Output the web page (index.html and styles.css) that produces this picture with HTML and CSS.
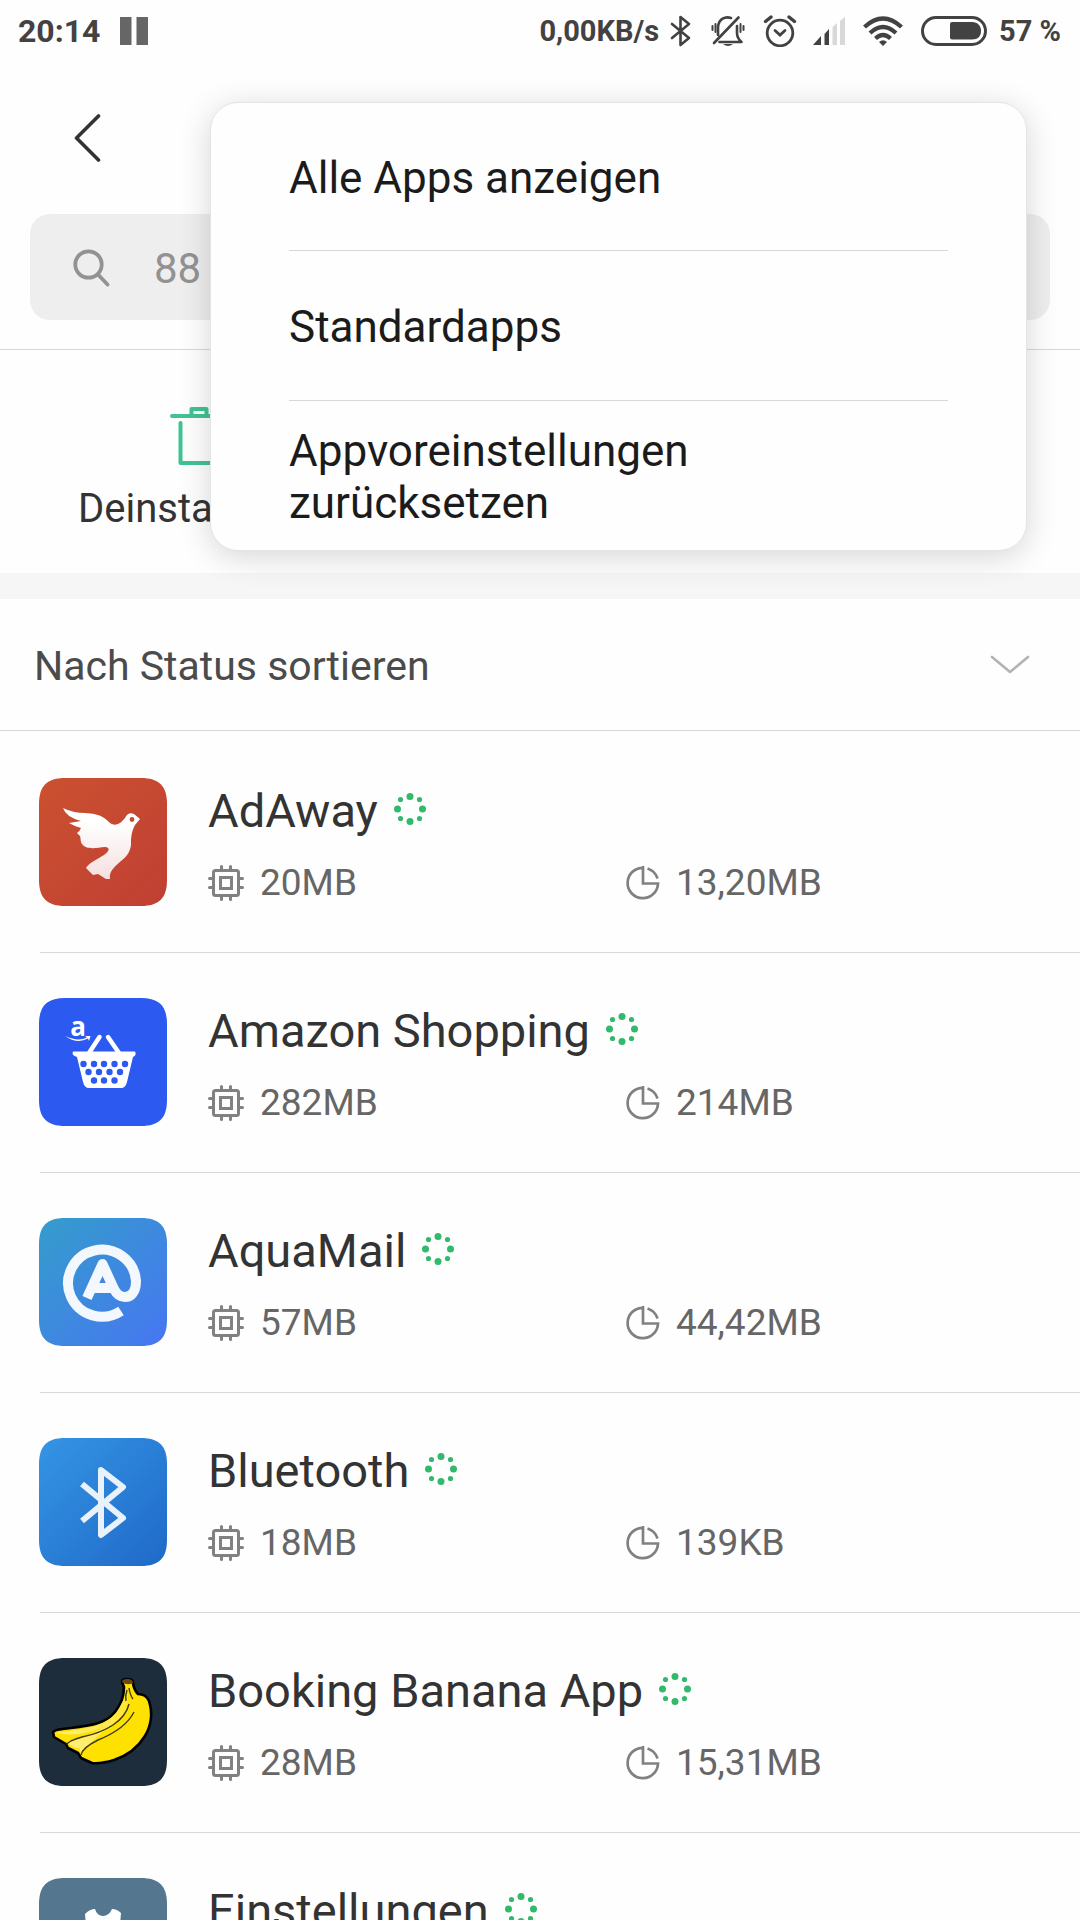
FILE: index.html
```
<!DOCTYPE html>
<html lang="de">
<head>
<meta charset="utf-8">
<meta name="viewport" content="width=device-width, initial-scale=1">
<title>Apps</title>
<link rel="stylesheet" href="styles.css">
</head>
<body>
<svg class="defs" aria-hidden="true">
  <defs>
    <linearGradient id="g-red" x1="0" y1="0" x2="1" y2="1"><stop offset="0" stop-color="#cb5130"/><stop offset="1" stop-color="#c03f33"/></linearGradient>
    <linearGradient id="g-aqua" x1="0" y1="0" x2="1" y2="1"><stop offset="0" stop-color="#349dcb"/><stop offset="1" stop-color="#4776f2"/></linearGradient>
    <linearGradient id="g-blue" x1="0" y1="0" x2="1" y2="1"><stop offset="0" stop-color="#3595e4"/><stop offset="1" stop-color="#1f69c8"/></linearGradient>
    <linearGradient id="g-white" x1="0" y1="0" x2="0" y2="1"><stop offset="0.2" stop-color="#ffffff"/><stop offset="1" stop-color="#f5dfdf"/></linearGradient>
    <linearGradient id="g-peel" x1="0" y1="1" x2="1" y2="0"><stop offset="0" stop-color="#fff08a"/><stop offset="1" stop-color="#ffe526"/></linearGradient>
    <symbol id="squircle" viewBox="0 0 128 128"><path d="M0 64V26C0 8 8 0 26 0H102C120 0 128 8 128 26V102C128 120 120 128 102 128H26C8 128 0 120 0 102Z"/></symbol>
    <symbol id="chip" viewBox="0 0 36 36"><g fill="none" stroke="#818181" stroke-width="3"><rect x="5.500" y="5.500" width="25" height="25" rx="2"/><rect x="12.500" y="12.500" width="11" height="11"/><path stroke-linecap="round" d="M13.500 1.500V4M22.500 1.500V4M13.500 32V34.500M22.500 32V34.500M1.500 13.500H4M1.500 22.500H4M32 13.500H34.500M32 22.500H34.500"/></g></symbol>
    <symbol id="pie" viewBox="0 0 34 34"><g fill="none" stroke="#818181" stroke-width="2.700"><path d="M17 0V17.500H32A15.200 15.200 0 1 1 17 1.800"/><path d="M21.500 2.500A15.200 15.200 0 0 1 31.500 12.500"/></g></symbol>
    <symbol id="dots" viewBox="0 0 32 32"><g fill="#33b96c"><circle cx="16" cy="3.500" r="3.500"/><circle cx="28.500" cy="16" r="3.500"/><circle cx="16" cy="28.500" r="3.500"/><circle cx="3.500" cy="16" r="3.500"/><circle cx="25.500" cy="6.500" r="2.600"/><circle cx="25.500" cy="25.500" r="2.600"/><circle cx="6.500" cy="25.500" r="2.600"/><circle cx="6.500" cy="6.500" r="2.600"/></g></symbol>
  </defs>
</svg>

<div class="status-bar">
  <span class="clock">20:14</span>
  <svg class="pause" width="28" height="28" viewBox="0 0 28 28"><path fill="#666" d="M0 0H11.500V28H0ZM16.500 0H28V28H16.500Z"/></svg>
  <span class="speed">0,00KB/s</span>
  <svg class="st-bt" width="22" height="32" viewBox="0 0 22 32"><path d="M2 9L19 23L10.500 30V2L19 9L2 23" fill="none" stroke="#424242" stroke-width="2.600" stroke-linejoin="round" stroke-linecap="round"/></svg>
  <svg class="st-bell" width="34" height="32" viewBox="0 0 34 32"><g fill="none" stroke="#424242" stroke-width="2.600" stroke-linecap="round"><path d="M7 20V11.500C8 4 14 1 20 3M8.500 27H30.500C27 24 26 22 26 18V11M3 28L27.500 2.500" stroke-linejoin="round"/><path stroke-width="2" d="M1.500 11V15M4.500 9V17M29.500 9V17M32.500 11V15"/></g><path d="M12 29H22Q17 33 12 29Z" fill="#424242"/></svg>
  <svg class="st-alarm" width="34" height="32" viewBox="0 0 34 32"><g fill="none" stroke="#424242" stroke-width="2.800" stroke-linecap="round"><circle cx="17" cy="18" r="12.800"/><path d="M12 15.500L17 20L22 15.500"/><path stroke-width="3.400" d="M2.500 6.500L8 2M31.500 6.500L26 2"/></g></svg>
  <svg class="st-signal" width="32" height="28" viewBox="0 0 32 28"><path fill="#424242" d="M0 28L8 19V28ZM11.500 17L16 12V28H11.500Z"/><path fill="#d8d8d8" d="M19.500 10L24 6V28H19.500ZM27 4L32 0V28H27Z"/></svg>
  <svg class="st-wifi" width="40" height="30" viewBox="0 0 40 30"><g fill="none" stroke="#424242" stroke-width="4.200"><path d="M1.500 11Q20-6 38.500 11"/><path d="M7 17Q20 5 33 17"/><path d="M12.500 22.500Q20 15.500 27.500 22.500"/></g><path fill="#424242" d="M16 26Q20 22.500 24 26L20 30Z"/></svg>
  <svg class="st-battery" width="66" height="30" viewBox="0 0 66 30"><rect x="1.500" y="1.500" width="63" height="27" rx="13.500" fill="none" stroke="#424242" stroke-width="3"/><path fill="#424242" d="M31 6H51C57 6 60 10 60 15S57 23.500 51 23.500H31Q29 23.500 29 21.500V8Q29 6 31 6Z"/></svg>
  <span class="percent">57 %</span>
</div>

<header class="header">
  <button class="back" type="button" aria-label="Zurück"><svg width="28" height="48" viewBox="0 0 28 48"><path d="M24.500 2L2.500 24L24.500 46" fill="none" stroke="#333" stroke-width="3.600" stroke-linecap="round" stroke-linejoin="round"/></svg></button>
  <label class="search">
    <svg width="38" height="38" viewBox="0 0 38 38"><g fill="none" stroke="#929292" stroke-width="3.800" stroke-linecap="round"><circle cx="15.500" cy="15.500" r="13.200"/><path d="M25.500 26L34.500 35.500"/></g></svg>
    <input type="text" placeholder="88" aria-label="Apps suchen">
  </label>

  <div class="menu">
    <button type="button">Alle Apps anzeigen</button>
    <button type="button">Standardapps</button>
    <button type="button">Appvoreinstellungen zurücksetzen</button>
  </div>
</header>

<div class="actions">
  <button class="action" type="button">
    <svg width="58" height="60" viewBox="0 0 58 60"><path d="M2 10H56M21.500 9V3H36.500V9M10.500 17V57H47.500V17" fill="none" stroke="#40c392" stroke-width="4" stroke-linecap="round" stroke-linejoin="round"/></svg>
    <span>Deinstallieren</span>
  </button>
</div>

<button class="sort" type="button">
  <span>Nach Status sortieren</span>
  <svg width="40" height="22" viewBox="0 0 40 22"><path d="M2 2L20 17L38 2" fill="none" stroke="#b3b3b3" stroke-width="2.600" stroke-linecap="round" stroke-linejoin="round"/></svg>
</button>

<main class="apps">
  <article class="app">
    <svg class="app-icon" viewBox="0 0 128 128"><use href="#squircle" fill="url(#g-red)"/><path fill="url(#g-white)" d="M24 30Q34 35 46 35C62 36 66 40 71 45C77 49 82 45 86 40C88 36 91 34 95 36L101 41L96 47C92 55 92 60 92 67C91 75 87 79 82 83C74 90 70 94 71 101H67L59 96L54 97L47 90C50 85 57 82 65 77C71 73 71 69 66 69C57 70 47 72 43 66C41 63 42 60 41 58L38 55Q41 53 42 50Q35 48 30 45L42 43Q27 39 24 30Z"/><circle cx="93" cy="41.500" r="2.400" fill="#c44a33"/></svg>
    <div class="info">
      <h2>AdAway <svg class="dots"><use href="#dots"/></svg></h2>
      <div class="usage"><span><svg class="chip"><use href="#chip"/></svg>20MB</span><span><svg class="pie"><use href="#pie"/></svg>13,20MB</span></div>
    </div>
  </article>
  <article class="app">
    <svg class="app-icon" viewBox="0 0 128 128"><use href="#squircle" fill="#2c59f0"/><g fill="#fff"><text class="amazon-a" x="39" y="37.500" text-anchor="middle">a</text><path d="M26 38Q39 44 48 39.500L46 38H51.500L50 43L49 40.500Q38 46.500 26 38Z"/><path d="M34 53.500H96Q98 57 94 59L88 84Q86.500 90 82 90H50Q45.500 90 44 84L38 59Q32 57 34 53.500Z"/></g><path d="M50 55L60.500 39M80 55L69 39" stroke="#fff" stroke-width="4.500" stroke-linecap="round"/><g fill="#2c59f0"><circle cx="44.500" cy="66" r="3.200"/><circle cx="55" cy="66" r="3.200"/><circle cx="65" cy="66" r="3.200"/><circle cx="75.500" cy="66" r="3.200"/><circle cx="86" cy="66" r="3.200"/><circle cx="49.500" cy="74" r="3.200"/><circle cx="60" cy="74" r="3.200"/><circle cx="70.500" cy="74" r="3.200"/><circle cx="81" cy="74" r="3.200"/><circle cx="55" cy="82.500" r="3.200"/><circle cx="65" cy="82.500" r="3.200"/><circle cx="75.500" cy="82.500" r="3.200"/></g></svg>
    <div class="info">
      <h2>Amazon Shopping <svg class="dots"><use href="#dots"/></svg></h2>
      <div class="usage"><span><svg class="chip"><use href="#chip"/></svg>282MB</span><span><svg class="pie"><use href="#pie"/></svg>214MB</span></div>
    </div>
  </article>
  <article class="app">
    <svg class="app-icon" viewBox="0 0 128 128"><use href="#squircle" fill="url(#g-aqua)"/><path d="M82 93A34 33.500 0 1 1 97 63C97 74 92 79 86 79C80 79 77 75 75 71L63.500 46L48 80M54 70H75" fill="none" stroke="#f3f7fe" stroke-width="10" stroke-linejoin="round"/></svg>
    <div class="info">
      <h2>AquaMail <svg class="dots"><use href="#dots"/></svg></h2>
      <div class="usage"><span><svg class="chip"><use href="#chip"/></svg>57MB</span><span><svg class="pie"><use href="#pie"/></svg>44,42MB</span></div>
    </div>
  </article>
  <article class="app">
    <svg class="app-icon" viewBox="0 0 128 128"><use href="#squircle" fill="url(#g-blue)"/><path d="M43 46L84 80L62 97V32L84 49L43 83" fill="none" stroke="#e9f1fb" stroke-width="6" stroke-linejoin="round"/></svg>
    <div class="info">
      <h2>Bluetooth <svg class="dots"><use href="#dots"/></svg></h2>
      <div class="usage"><span><svg class="chip"><use href="#chip"/></svg>18MB</span><span><svg class="pie"><use href="#pie"/></svg>139KB</span></div>
    </div>
  </article>
  <article class="app">
    <svg class="app-icon" viewBox="0 0 128 128"><use href="#squircle" fill="#1d2d3b"/><path fill="#ffe100" stroke="#000" stroke-width="2.600" stroke-linejoin="round" d="M83 24Q83 21 88 21Q94 21 94 25Q95 32 99 36Q107 36 110 43C118 68 102 93 75 102Q62 106 53 105L42 100L39 95L29 90L27 86L15 79L14 74Q16 72 20 71.500C45 68 65 68 76 54Q85 43 85 29Z"/><path fill="url(#g-peel)" d="M17 75C43 71 65 70 78 54L89 34Q91 52 79 62Q55 79 43 95Q40 94 41 90Q35 91 29 85Q55 76 65 68Q42 80 17 75Z"/><path fill="none" stroke="#3d3a13" stroke-width="1.400" d="M28 87Q28 83 43 79C67 74 86 63 90 46M42 97Q43 90 59 82C79 74 90 64 95 54M88 32Q86 38 87 43M90 30Q91 37 94 41"/><path fill="#684719" d="M83 24Q83 21 88 21Q94 21 94 25Q88 28 83 24Z"/></svg>
    <div class="info">
      <h2>Booking Banana App <svg class="dots"><use href="#dots"/></svg></h2>
      <div class="usage"><span><svg class="chip"><use href="#chip"/></svg>28MB</span><span><svg class="pie"><use href="#pie"/></svg>15,31MB</span></div>
    </div>
  </article>
  <article class="app">
    <svg class="app-icon" viewBox="0 0 128 128"><use href="#squircle" fill="#54778f"/><path fill="#fff" d="M46 36Q51 31 56 31Q58 38 64 38Q70 38 73 31Q78 31 82 35L81 47L95 56V76L81 84L82 96H46L47 84L33 76V56L47 47Z"/></svg>
    <div class="info">
      <h2>Einstellungen <svg class="dots"><use href="#dots"/></svg></h2>
    </div>
  </article>
</main>
</body>
</html>
```
FILE: styles.css
```
* { box-sizing: border-box; }
html, body { height: 100%; }
body {
  margin: 0;
  display: flex;
  flex-direction: column;
  overflow: hidden;
  background: #fefefe;
  color: #333;
  font-family: Roboto, "Liberation Sans", sans-serif;
  font-size: 40px;
}
body > * { flex-shrink: 0; }
svg { display: block; flex-shrink: 0; }
button {
  border: 0;
  padding: 0;
  background: none;
  color: inherit;
  font: inherit;
  text-align: left;
}
.defs { position: absolute; width: 0; height: 0; }

.status-bar {
  display: flex;
  align-items: center;
  height: 60px;
  padding: 1px 19px 0 18px;
  color: #424242;
  font-size: 29px;
  font-weight: 700;
}
.clock { font-size: 32px; }
.pause { margin-left: 20px; }
.speed { margin-left: auto; }
.st-bt { margin-left: 11px; }
.st-bell { margin-left: 19px; }
.st-alarm { margin-left: 18px; }
.st-signal { margin-left: 16px; }
.st-wifi { margin-left: 18px; }
.st-battery { margin-left: 18px; }
.percent { margin-left: 12px; }

.header {
  position: relative;
  padding: 54px 30px 29px;
  border-bottom: 1px solid #d8d8d8;
}
.back { display: block; margin-left: 44px; }
.search {
  display: flex;
  align-items: center;
  height: 106px;
  margin-top: 52px;
  padding: 2px 43px 0;
  gap: 43px;
  border-radius: 20px;
  background: #eee;
}
.search input {
  flex: 1;
  min-width: 0;
  border: 0;
  padding: 0;
  background: none;
  font: inherit;
  font-size: 42px;
}
.search input::placeholder { color: #929292; opacity: 1; }

.menu {
  position: absolute;
  z-index: 1;
  top: 42px;
  left: 210px;
  right: 53px;
  padding: 0 78px;
  border: 1px solid #e4e4e4;
  border-radius: 28px;
  background: #fefefe;
  box-shadow: 0 6px 32px rgba(0, 0, 0, 0.16);
}
.menu button {
  display: flex;
  align-items: center;
  width: 100%;
  height: 150px;
  padding-top: 3px;
  color: #1b1b1b;
  font-size: 44px;
  line-height: 52px;
}
.menu button:first-child { height: 147px; }
.menu button + button { border-top: 1px solid #d8d8d8; }

.actions {
  padding: 56px 78px 40px;
  border-bottom: 26px solid #f6f6f6;
}
.action {
  display: flex;
  flex-direction: column;
  align-items: center;
  gap: 19px;
  line-height: 48px;
}

.sort {
  display: flex;
  align-items: center;
  justify-content: space-between;
  height: 132px;
  padding: 2px 50px 0 34px;
  border-bottom: 1px solid #d8d8d8;
  color: #4b4b4b;
  font-size: 41px;
}

.apps { padding: 2px 0 0 40px; }
.app {
  display: flex;
  gap: 41px;
  height: 220px;
  padding-top: 45px;
  border-bottom: 1px solid #d8d8d8;
}
.app-icon { width: 128px; height: 128px; margin-left: -1px; }
.info { flex: 1; }
h2 {
  display: flex;
  align-items: center;
  gap: 16px;
  margin: 5px 0 0;
  font-size: 47px;
  font-weight: 400;
  line-height: 56px;
}
.dots { width: 32px; height: 32px; margin-bottom: 4px; }
.usage {
  display: grid;
  grid-template-columns: 418px 1fr;
  margin-top: 22px;
  color: #666;
  font-size: 37px;
  line-height: 44px;
}
.usage span { display: flex; align-items: center; gap: 16px; }
.chip { width: 36px; height: 36px; }
.pie { width: 34px; height: 34px; }
.amazon-a { font: 700 26px "Open Sans", sans-serif; }
```
